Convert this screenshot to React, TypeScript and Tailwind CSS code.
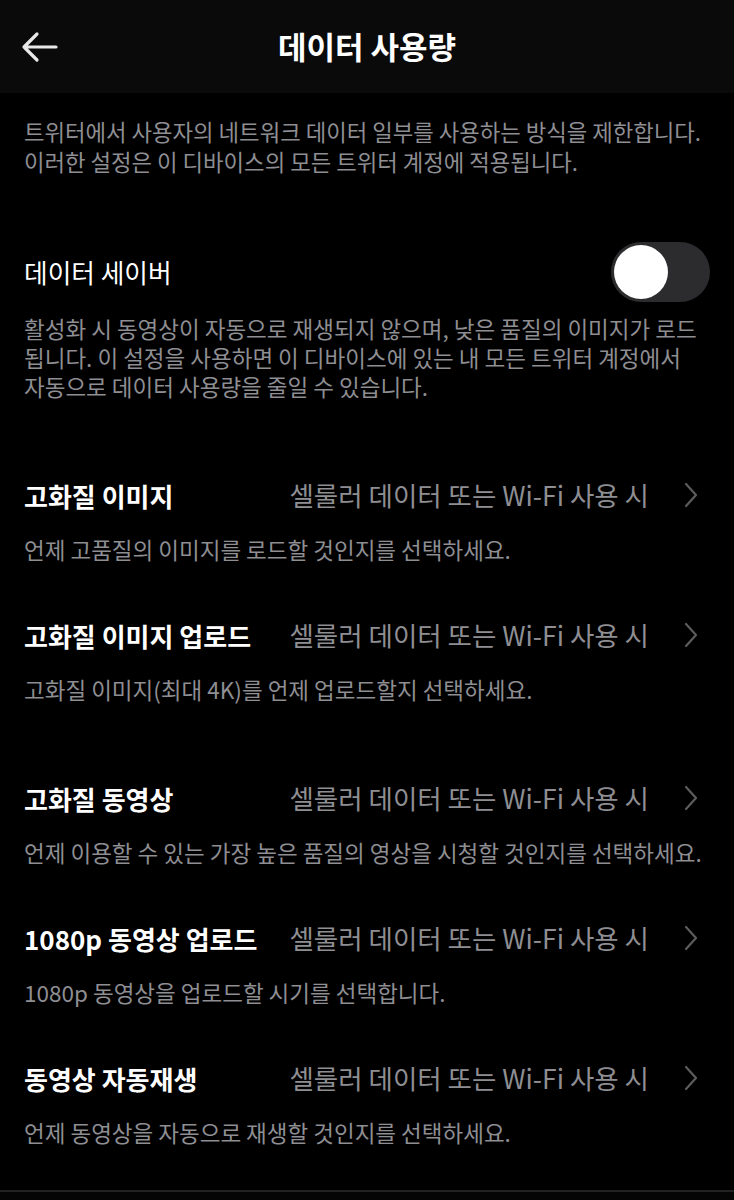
import React from "react";

const VALUE = "셀룰러 데이터 또는 Wi-Fi 사용 시";

interface SettingItem {
	title: string;
	description: string;
}

const imageItems: SettingItem[] = [
	{ title: "고화질 이미지", description: "언제 고품질의 이미지를 로드할 것인지를 선택하세요." },
	{ title: "고화질 이미지 업로드", description: "고화질 이미지(최대 4K)를 언제 업로드할지 선택하세요." },
];

const videoItems: SettingItem[] = [
	{
		title: "고화질 동영상",
		description: "언제 이용할 수 있는 가장 높은 품질의 영상을 시청할 것인지를 선택하세요.",
	},
	{ title: "1080p 동영상 업로드", description: "1080p 동영상을 업로드할 시기를 선택합니다." },
	{ title: "동영상 자동재생", description: "언제 동영상을 자동으로 재생할 것인지를 선택하세요." },
];

const BackArrow = () => (
	<svg width="38" height="32" viewBox="0 0 38 32" fill="none">
		<path
			d="M3 16 H35 M16 3 L3 16 L16 29"
			stroke="#e8e8e8"
			strokeWidth="3.2"
			strokeLinecap="round"
			strokeLinejoin="round"
		/>
	</svg>
);

const Chevron = () => (
	<svg width="14" height="26" viewBox="0 0 14 26" fill="none">
		<path d="M2 2 L12 13 L2 24" stroke="#5c5c5e" strokeWidth="2.2" strokeLinecap="round" strokeLinejoin="round" />
	</svg>
);

const Toggle = () => (
	<div className="w-[99px] h-[60px] rounded-full bg-[#2c2c2e] p-[3px] flex items-center">
		<div className="size-[54px] rounded-full bg-white" />
	</div>
);

const SettingRow = ({ item }: { item: SettingItem }) => (
	<div className="flex flex-col">
		<div className="flex items-center h-[48px] pl-6 pr-[36px]">
			<span className="text-[26px] font-bold text-white whitespace-nowrap">{item.title}</span>
			<span className="flex-1 text-right text-[26.5px] text-[#8e8e93] whitespace-nowrap">{VALUE}</span>
			<div className="ml-[35px] flex items-center">
				<Chevron />
			</div>
		</div>
		<p className="mt-[16px] px-6 text-[22.5px] leading-[29px] text-[#8e8e93] whitespace-nowrap">
			{item.description}
		</p>
	</div>
);

export default function App() {
	return (
		<div
			className="w-[734px] min-h-[1200px] bg-black flex flex-col"
			style={{ fontFamily: "'Noto Sans CJK KR', 'Noto Sans', sans-serif" }}
		>
			<header className="h-[93px] bg-[#0a0a0a] grid grid-cols-[1fr_auto_1fr] items-center">
				<div className="pl-[21px] flex items-center">
					<BackArrow />
				</div>
				<h1 className="text-[31px] font-bold text-white">데이터 사용량</h1>
				<div />
			</header>

			<p className="pt-[23px] px-6 text-[22.3px] leading-[30px] text-[#8e8e93] whitespace-nowrap">
				트위터에서 사용자의 네트워크 데이터 일부를 사용하는 방식을 제한합니다.
				<br />
				이러한 설정은 이 디바이스의 모든 트위터 계정에 적용됩니다.
			</p>

			<section className="mt-[66px]">
				<div className="flex items-center justify-between pl-6 pr-6">
					<span className="text-[25.7px] text-white">데이터 세이버</span>
					<Toggle />
				</div>
				<p className="mt-[12px] px-6 text-[22.5px] leading-[29px] text-[#8e8e93] whitespace-nowrap">
					활성화 시 동영상이 자동으로 재생되지 않으며, 낮은 품질의 이미지가 로드
					<br />
					됩니다. 이 설정을 사용하면 이 디바이스에 있는 내 모든 트위터 계정에서
					<br />
					자동으로 데이터 사용량을 줄일 수 있습니다.
				</p>
			</section>

			<section className="mt-[70px] flex flex-col gap-[47px]">
				{imageItems.map((item) => (
					<SettingRow key={item.title} item={item} />
				))}
			</section>

			<section className="mt-[70px] flex flex-col gap-[47px]">
				{videoItems.map((item) => (
					<SettingRow key={item.title} item={item} />
				))}
			</section>

			<div className="mt-[43px] border-t-2 border-[#222224] h-[12px] bg-[#050505]" />
		</div>
	);
}
